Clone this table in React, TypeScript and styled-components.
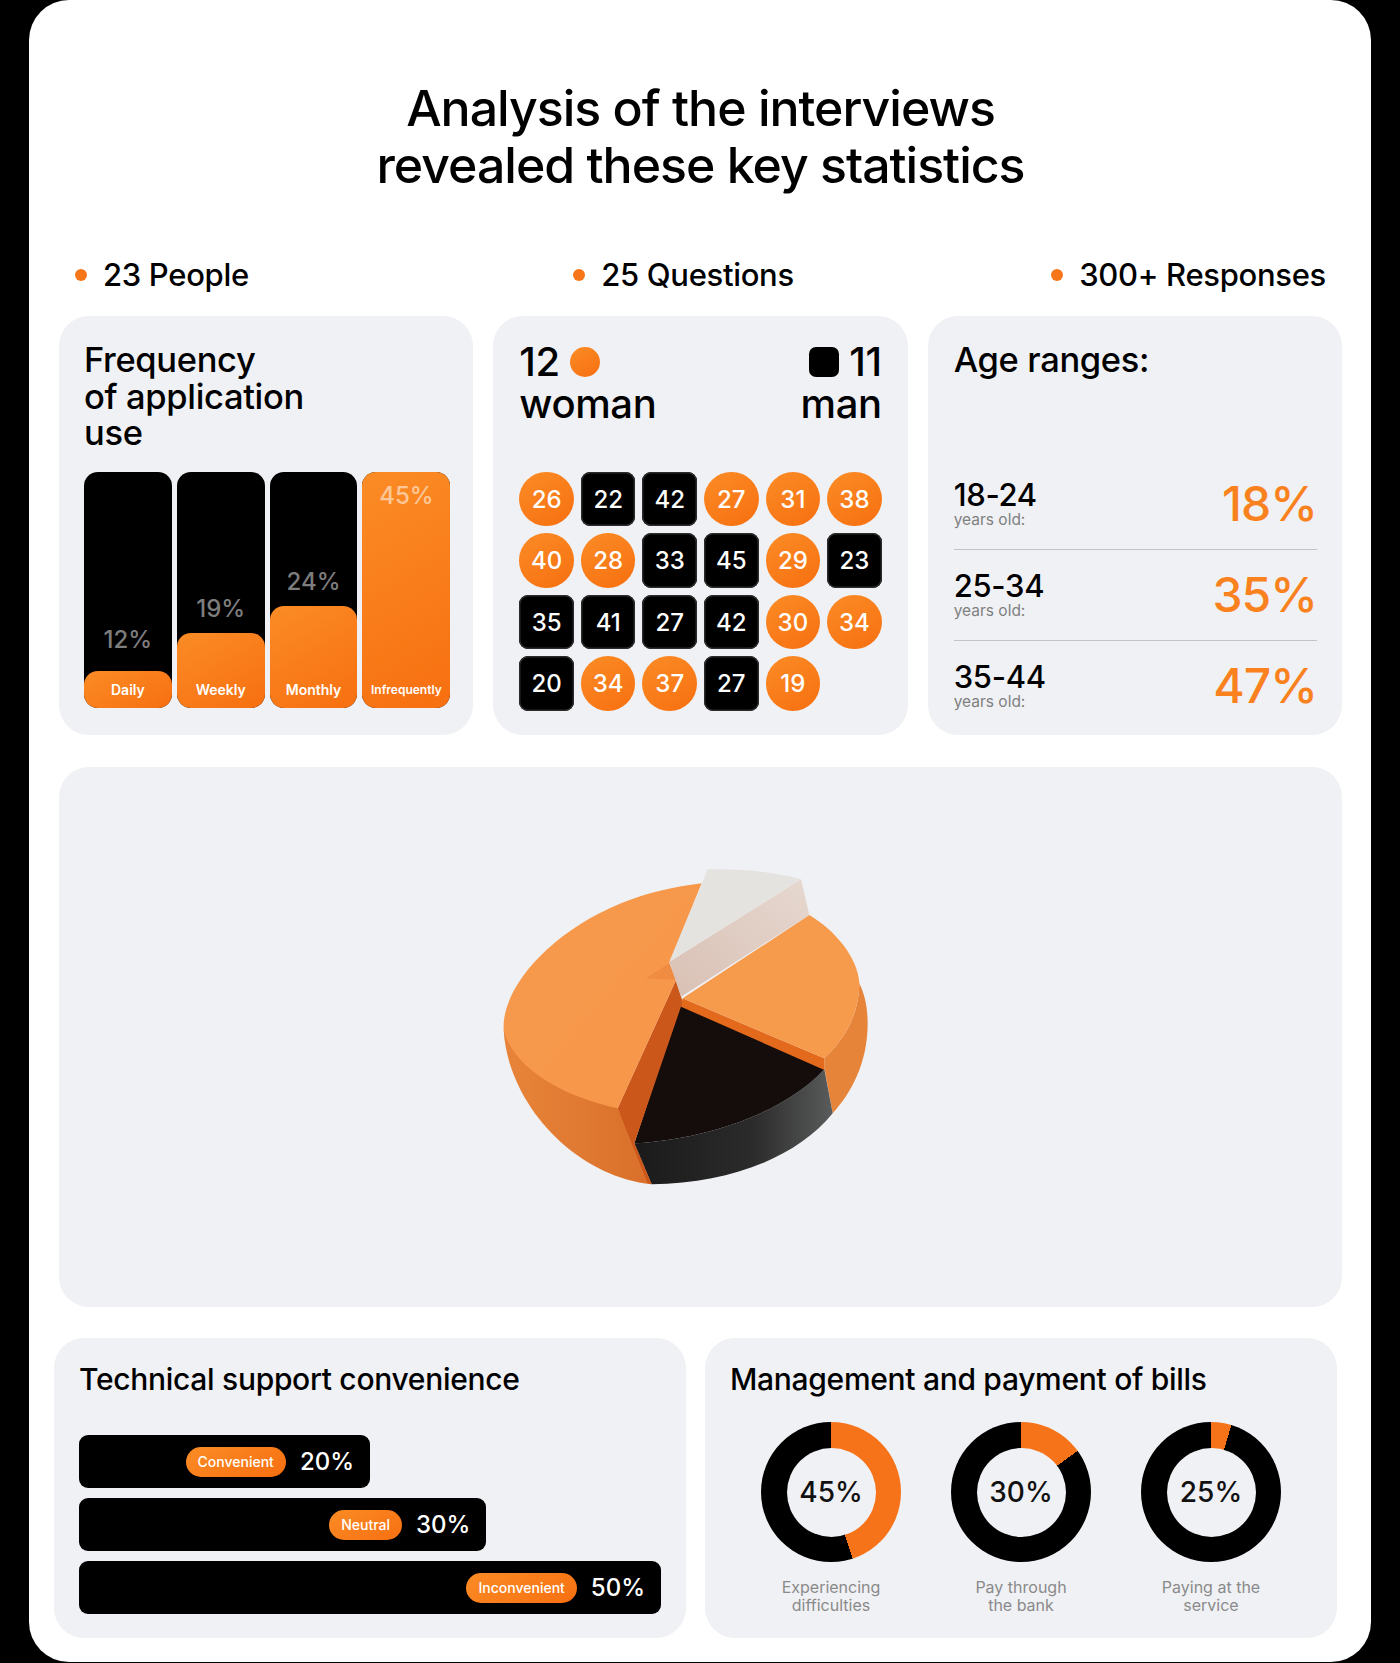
import React from "react";
import styled, { createGlobalStyle } from "styled-components";

const GlobalStyle = createGlobalStyle`
  * { box-sizing: border-box; }
  body {
    margin: 0;
    background: #000;
    font-family: Inter, "Noto Sans", "Liberation Sans", sans-serif;
    color: #000;
  }
`;

const ORANGE = "linear-gradient(150deg, #fb8c25 0%, #f76f10 100%)";
const CARD_BG = "#f0f1f5";

const Page = styled.div`
  padding: 0 29px;
  background: #000;
`;

const Sheet = styled.div`
  background: #fff;
  border-radius: 40px;
  padding: 80px 29px 25px 30px;
`;

const Title = styled.h1`
  margin: 0;
  text-align: center;
  font-size: 50px;
  line-height: 57px;
  font-weight: 500;
  letter-spacing: -0.02em;
`;

const StatsRow = styled.div`
  margin-top: 63px;
  padding: 0 16px;
  display: grid;
  grid-template-columns: repeat(3, 1fr);
`;

const Stat = styled.div<{ $align: "start" | "center" | "end"; $shift?: number }>`
  justify-self: ${(p) => p.$align};
  margin-right: ${(p) => p.$shift ?? 0}px;
  display: flex;
  align-items: center;
  gap: 16px;
  font-size: 31px;
  line-height: 36px;
  font-weight: 500;
  letter-spacing: -0.01em;
`;

const Dot = styled.span`
  width: 12px;
  height: 12px;
  border-radius: 50%;
  background: #f7761a;
`;

const TopGrid = styled.div`
  margin-top: 23px;
  display: grid;
  grid-template-columns: repeat(3, 1fr);
  gap: 20px;
  height: 419px;
`;

const Card = styled.section`
  background: ${CARD_BG};
  border-radius: 30px;
  display: flex;
  flex-direction: column;
`;

const CardTitle = styled.h2`
  margin: 0;
  font-size: 34.5px;
  line-height: 36.5px;
  font-weight: 500;
  letter-spacing: -0.01em;
`;

/* frequency */

const FreqCard = styled(Card)`
  padding: 26px 23px 27px 25px;
`;

const Bars = styled.div`
  margin-top: auto;
  height: 236px;
  display: grid;
  grid-template-columns: repeat(4, 1fr);
  gap: 5px;
`;

const Bar = styled.div`
  background: #000;
  border-radius: 14px;
  display: flex;
  flex-direction: column;
  justify-content: flex-end;
  align-items: stretch;
`;

const BarValue = styled.span<{ $gap: number; $inside?: boolean }>`
  text-align: center;
  font-size: 24px;
  line-height: 28px;
  font-weight: 500;
  color: ${(p) => (p.$inside ? "rgba(255,255,255,0.55)" : "#7d7d7d")};
  margin-bottom: ${(p) => p.$gap}px;
`;

const Fill = styled.div<{ $h: number }>`
  height: ${(p) => p.$h}px;
  flex: ${(p) => (p.$h >= 236 ? "1" : "none")};
  background: ${ORANGE};
  border-radius: 14px;
  display: flex;
  flex-direction: column;
  justify-content: space-between;
  align-items: center;
  padding: 10px 0 10px;
`;

const BarName = styled.span<{ $small?: boolean }>`
  margin-top: auto;
  color: #fff;
  font-size: ${(p) => (p.$small ? 12 : 14)}px;
  line-height: 17px;
  font-weight: 600;
`;

/* gender */

const GenderCard = styled(Card)`
  padding: 25px 26px 24px;
`;

const GenderHead = styled.div`
  display: flex;
  justify-content: space-between;
  font-size: 40px;
  line-height: 42px;
  font-weight: 500;
  letter-spacing: -0.01em;
`;

const GenderCol = styled.div<{ $right?: boolean }>`
  display: flex;
  flex-direction: column;
  align-items: ${(p) => (p.$right ? "flex-end" : "flex-start")};
`;

const CountLine = styled.div`
  display: flex;
  align-items: center;
  gap: 10px;
`;

const Marker = styled.span<{ $round?: boolean }>`
  width: 30px;
  height: 30px;
  border-radius: ${(p) => (p.$round ? "50%" : "7px")};
  background: ${(p) => (p.$round ? ORANGE : "#000")};
`;

const AgeGrid = styled.div`
  margin-top: auto;
  display: grid;
  grid-template-columns: repeat(6, 1fr);
  gap: 7px;
`;

const Chip = styled.div<{ $round?: boolean }>`
  aspect-ratio: 1;
  display: flex;
  align-items: center;
  justify-content: center;
  color: #fff;
  font-size: 24px;
  font-weight: 500;
  border-radius: ${(p) => (p.$round ? "50%" : "9px")};
  background: ${(p) => (p.$round ? ORANGE : "#000")};
  box-shadow: ${(p) => (p.$round ? "none" : "inset 0 0 0 1.5px #2b2b2b")};
`;

/* age ranges */

const AgeCard = styled(Card)`
  padding: 26px 25px 24px 26px;
`;

const Ranges = styled.div`
  margin-top: auto;
`;

const RangeRow = styled.div`
  display: flex;
  justify-content: space-between;
  align-items: center;
  padding: 20px 0;
  border-bottom: 1px solid #c3c4c8;
  &:last-child {
    border-bottom: none;
    padding-bottom: 0;
  }
`;

const RangeText = styled.div`
  display: flex;
  flex-direction: column;
`;

const RangeValue = styled.span`
  font-size: 31px;
  line-height: 32px;
  font-weight: 500;
  letter-spacing: -0.01em;
`;

const RangeSub = styled.span`
  font-size: 15.5px;
  line-height: 18px;
  color: #7f7f7f;
`;

const RangePct = styled.span`
  font-size: 48px;
  line-height: 50px;
  font-weight: 500;
  color: #f9821f;
  letter-spacing: -0.02em;
`;

/* pie */

const PieCard = styled(Card)`
  margin-top: 32px;
  height: 540px;
  align-items: center;
  justify-content: center;
`;

/* bottom */

const BottomGrid = styled.div`
  margin: 31px 5px 0 -5px;
  display: grid;
  grid-template-columns: repeat(2, 1fr);
  gap: 19px;
  height: 299px;
`;

const WideCard = styled(Card)`
  padding: 24px 25px;
`;

const WideTitle = styled.h3`
  margin: 0;
  font-size: 30px;
  line-height: 34px;
  font-weight: 500;
  letter-spacing: -0.01em;
`;

const HBars = styled.div`
  margin-top: auto;
  display: flex;
  flex-direction: column;
  gap: 10px;
`;

const HBar = styled.div<{ $w: number }>`
  width: ${(p) => p.$w}%;
  height: 53px;
  background: #000;
  border-radius: 9px;
  display: flex;
  justify-content: flex-end;
  align-items: center;
  gap: 14px;
  padding-right: 16px;
`;

const Pill = styled.span`
  height: 30px;
  padding: 0 12px;
  border-radius: 15px;
  background: ${ORANGE};
  color: #fff;
  font-size: 14px;
  font-weight: 500;
  display: flex;
  align-items: center;
`;

const HValue = styled.span`
  color: #fff;
  font-size: 24px;
  font-weight: 500;
`;

const Donuts = styled.div`
  margin-top: 26px;
  display: grid;
  grid-template-columns: repeat(3, 190px);
  justify-content: center;
`;

const DonutItem = styled.div`
  display: flex;
  flex-direction: column;
  align-items: center;
`;

const Ring = styled.div<{ $deg: number }>`
  width: 140px;
  height: 140px;
  border-radius: 50%;
  background: conic-gradient(#f7731a 0deg ${(p) => p.$deg}deg, #000 ${(p) => p.$deg}deg 360deg);
  display: flex;
  align-items: center;
  justify-content: center;
`;

const Hole = styled.div`
  width: 89px;
  height: 89px;
  border-radius: 50%;
  background: ${CARD_BG};
  display: flex;
  align-items: center;
  justify-content: center;
  font-size: 28px;
  font-weight: 500;
  color: #111;
`;

const DonutLabel = styled.span`
  margin-top: 16px;
  text-align: center;
  font-size: 16px;
  line-height: 18px;
  color: #8a8a8a;
`;

const freq = [
  { name: "Daily", value: "12%", h: 37, gap: 17 },
  { name: "Weekly", value: "19%", h: 75, gap: 10 },
  { name: "Monthly", value: "24%", h: 102, gap: 10 },
  { name: "Infrequently", value: "45%", h: 236, gap: 0 },
];

const ages: [number, boolean][] = [
  [26, true], [22, false], [42, false], [27, true], [31, true], [38, true],
  [40, true], [28, true], [33, false], [45, false], [29, true], [23, false],
  [35, false], [41, false], [27, false], [42, false], [30, true], [34, true],
  [20, false], [34, true], [37, true], [27, false], [19, true],
];

const ranges = [
  { range: "18-24", pct: "18%" },
  { range: "25-34", pct: "35%" },
  { range: "35-44", pct: "47%" },
];

const support = [
  { label: "Convenient", value: "20%", w: 50 },
  { label: "Neutral", value: "30%", w: 70 },
  { label: "Inconvenient", value: "50%", w: 100 },
];

const bills = [
  { value: "45%", deg: 162, label: ["Experiencing", "difficulties"] },
  { value: "30%", deg: 54, label: ["Pay through", "the bank"] },
  { value: "25%", deg: 17, label: ["Paying at the", "service"] },
];

const PieChart = () => (
  <svg width="420" height="350" viewBox="30 36 1260 1050">
    <defs>
      <linearGradient id="wallL" x1="0" y1="0" x2="1" y2="0">
        <stop offset="0" stopColor="#e8843a" />
        <stop offset="1" stopColor="#d96f2a" />
      </linearGradient>
      <linearGradient id="wallB" x1="0" y1="0" x2="1" y2="0">
        <stop offset="0" stopColor="#1a1a1a" />
        <stop offset="0.6" stopColor="#2b2b2b" />
        <stop offset="1" stopColor="#5a5b5b" />
      </linearGradient>
      <linearGradient id="topL" x1="0" y1="0" x2="1" y2="1">
        <stop offset="0" stopColor="#f79a4c" />
        <stop offset="1" stopColor="#f6964a" />
      </linearGradient>
      <linearGradient id="sideW" x1="0" y1="1" x2="1" y2="0">
        <stop offset="0" stopColor="#d9c0b4" />
        <stop offset="1" stopColor="#e6d8d0" />
      </linearGradient>
    </defs>
    {/* left slice wall */}
    <path d="M 68 540 C 80 760 280 980 512 1003 L 460 880 L 410 775 Z" fill="url(#wallL)" />
    {/* right slice wall */}
    <path d="M 1030 625 C 1100 560 1135 480 1135 400 C 1150 430 1160 470 1160 520 C 1160 640 1110 730 1055 790 L 1030 655 Z" fill="#e6843a" />
    {/* black slice wall */}
    <path d="M 460 880 C 650 870 900 800 1030 658 L 1055 790 C 950 920 750 1000 512 1003 Z" fill="url(#wallB)" />
    {/* black slice top */}
    <path d="M 600 455 L 1030 658 C 900 800 650 870 460 880 Z" fill="#140d0b" />
    {/* left slice cut face */}
    <path d="M 410 775 L 585 390 L 605 455 L 460 880 L 512 1003 L 500 1000 Z" fill="#cc571b" />
    {/* left slice top */}
    <path d="M 662 100 L 565 340 L 585 390 L 410 775 C 250 740 100 660 68 540 C 60 420 200 250 420 160 C 500 128 580 110 662 100 Z" fill="url(#topL)" />
    <path d="M 495 385 L 565 340 L 585 390 Z" fill="#ef8c42" />
    {/* right slice cut stripe */}
    <path d="M 605 445 L 1030 625 L 1030 660 L 600 470 Z" fill="#e36a1c" />
    {/* right slice top */}
    <path d="M 605 445 L 985 195 C 1060 240 1130 320 1135 400 C 1135 480 1100 560 1030 625 Z" fill="#f69a4c" />
    {/* white slice */}
    <path d="M 565 335 L 960 88 L 985 195 L 600 440 Z" fill="url(#sideW)" />
    <path d="M 680 58 C 780 55 880 65 960 88 L 565 335 Z" fill="#e5e3e0" />
  </svg>
);

export default function App() {
  return (
    <>
      <GlobalStyle />
      <Page>
        <Sheet>
          <Title>
            Analysis of the interviews
            <br />
            revealed these key statistics
          </Title>

          <StatsRow>
            <Stat $align="start">
              <Dot />
              23 People
            </Stat>
            <Stat $align="center" $shift={34}>
              <Dot />
              25 Questions
            </Stat>
            <Stat $align="end">
              <Dot />
              300+ Responses
            </Stat>
          </StatsRow>

          <TopGrid>
            <FreqCard>
              <CardTitle>
                Frequency
                <br />
                of application
                <br />
                use
              </CardTitle>
              <Bars>
                {freq.map((f) =>
                  f.h >= 236 ? (
                    <Bar key={f.name}>
                      <Fill $h={f.h}>
                        <BarValue $gap={0} $inside>
                          {f.value}
                        </BarValue>
                        <BarName $small>{f.name}</BarName>
                      </Fill>
                    </Bar>
                  ) : (
                    <Bar key={f.name}>
                      <BarValue $gap={f.gap}>{f.value}</BarValue>
                      <Fill $h={f.h}>
                        <BarName>{f.name}</BarName>
                      </Fill>
                    </Bar>
                  )
                )}
              </Bars>
            </FreqCard>

            <GenderCard>
              <GenderHead>
                <GenderCol>
                  <CountLine>
                    12 <Marker $round />
                  </CountLine>
                  woman
                </GenderCol>
                <GenderCol $right>
                  <CountLine>
                    <Marker /> 11
                  </CountLine>
                  man
                </GenderCol>
              </GenderHead>
              <AgeGrid>
                {ages.map(([n, round], i) => (
                  <Chip key={i} $round={round}>
                    {n}
                  </Chip>
                ))}
              </AgeGrid>
            </GenderCard>

            <AgeCard>
              <CardTitle>Age ranges:</CardTitle>
              <Ranges>
                {ranges.map((r) => (
                  <RangeRow key={r.range}>
                    <RangeText>
                      <RangeValue>{r.range}</RangeValue>
                      <RangeSub>years old:</RangeSub>
                    </RangeText>
                    <RangePct>{r.pct}</RangePct>
                  </RangeRow>
                ))}
              </Ranges>
            </AgeCard>
          </TopGrid>

          <PieCard>
            <PieChart />
          </PieCard>

          <BottomGrid>
            <WideCard>
              <WideTitle>Technical support convenience</WideTitle>
              <HBars>
                {support.map((s) => (
                  <HBar key={s.label} $w={s.w}>
                    <Pill>{s.label}</Pill>
                    <HValue>{s.value}</HValue>
                  </HBar>
                ))}
              </HBars>
            </WideCard>

            <WideCard>
              <WideTitle>Management and payment of bills</WideTitle>
              <Donuts>
                {bills.map((b) => (
                  <DonutItem key={b.value}>
                    <Ring $deg={b.deg}>
                      <Hole>{b.value}</Hole>
                    </Ring>
                    <DonutLabel>
                      {b.label[0]}
                      <br />
                      {b.label[1]}
                    </DonutLabel>
                  </DonutItem>
                ))}
              </Donuts>
            </WideCard>
          </BottomGrid>
        </Sheet>
      </Page>
    </>
  );
}
